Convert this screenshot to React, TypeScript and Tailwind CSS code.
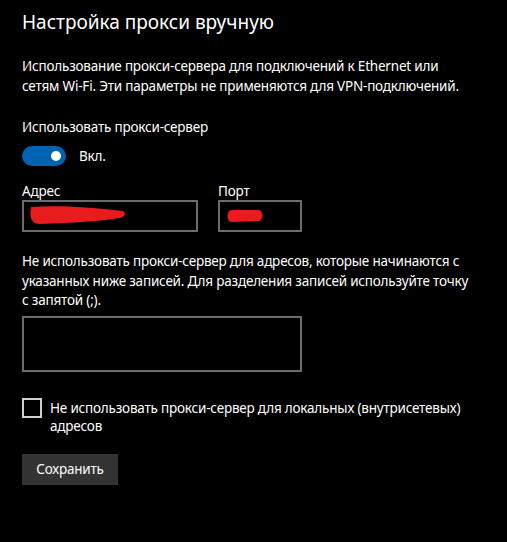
import React from "react";

const font = { fontFamily: '"Noto Sans", "Open Sans", sans-serif' };

function Toggle() {
  return (
    <div className="flex items-center">
      <div className="flex h-[20px] w-[44px] items-center justify-end rounded-full bg-[#0063b1] pr-[5px]">
        <div className="h-[10px] w-[10px] rounded-full bg-white" />
      </div>
      <span className="ml-[13px] text-[13.5px] leading-[20px] tracking-[-0.2px] text-white">Вкл.</span>
    </div>
  );
}

function Field({ label, width, children }: { label: string; width: string; children?: React.ReactNode }) {
  return (
    <div className="flex flex-col">
      <span className="text-[13.5px] leading-[18px] tracking-[-0.2px] text-white">{label}</span>
      <div className={`relative h-[32px] border-2 border-[#6b6b6b] ${width}`}>{children}</div>
    </div>
  );
}

export default function App() {
  return (
    <main className="min-h-[542px] w-[507px] bg-black pl-[22px] pt-[8px] text-white" style={font}>
      <h1 className="text-[19px] leading-[28px] font-normal">Настройка прокси вручную</h1>

      <p className="mt-[21px] text-[13.5px] leading-[19.5px] tracking-[-0.2px]">
        Использование прокси-сервера для подключений к Ethernet или
        <br />
        сетям Wi-Fi. Эти параметры не применяются для VPN-подключений.
      </p>

      <div className="mt-[21px] text-[13.5px] leading-[20px] tracking-[-0.2px]">Использовать прокси-сервер</div>
      <div className="mt-[9px]">
        <Toggle />
      </div>

      <div className="mt-[16px] flex gap-[20px]">
        <Field label="Адрес" width="w-[176px]">
          <svg className="absolute left-[-2px] top-[-2px]" width="176" height="32" viewBox="0 0 176 32">
            <path
              d="M9 7 C40 5 70 8 92 10 L101 11 C104 13 103 17 98 18 C80 21 50 23 18 24 C10 24 7 18 9 7 Z"
              fill="#e81c1c"
            />
          </svg>
        </Field>
        <Field label="Порт" width="w-[84px]">
          <svg className="absolute left-[-2px] top-[-2px]" width="84" height="32" viewBox="0 0 84 32">
            <path d="M14 10 L40 10 C46 10 46 21 40 21 L14 22 C8 22 8 10 14 10 Z" fill="#e81c1c" />
          </svg>
        </Field>
      </div>

      <p className="mt-[20px] text-[13.5px] leading-[19.5px] tracking-[-0.2px]">
        Не использовать прокси-сервер для адресов, которые начинаются с
        <br />
        указанных ниже записей. Для разделения записей используйте точку
        <br />с запятой (;).
      </p>

      <div className="mt-[5px] h-[56px] w-[280px] border-2 border-[#6b6b6b]" />

      <div className="mt-[26px] flex items-start gap-[8px]">
        <div className="h-[20px] w-[20px] shrink-0 border-2 border-[#cfcfcf]" />
        <span className="mt-[1px] text-[13.5px] leading-[18px] tracking-[-0.2px]">
          Не использовать прокси-сервер для локальных (внутрисетевых)
          <br />
          адресов
        </span>
      </div>

      <button className="mt-[19px] flex h-[31px] w-[96px] items-center justify-center bg-[#333333] text-[13.5px] tracking-[-0.2px] text-white">
        Сохранить
      </button>
    </main>
  );
}
